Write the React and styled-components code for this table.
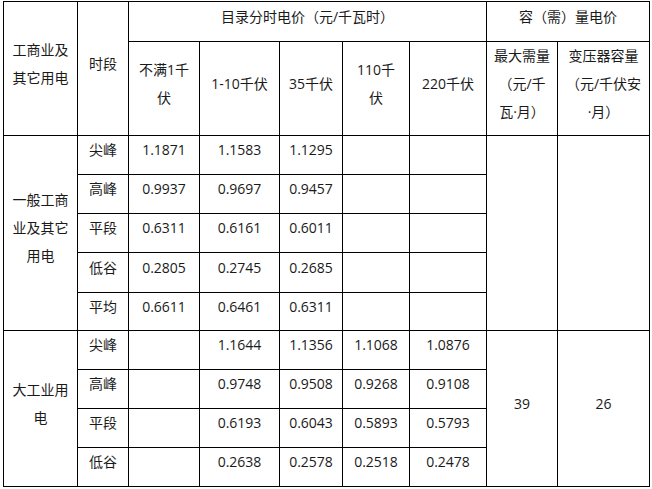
import styled, { createGlobalStyle } from 'styled-components';

const GlobalStyle = createGlobalStyle`
	html, body {
		margin: 0;
		padding: 0;
		background: #ffffff;
	}
`;

const Page = styled.div`
	padding: 1px 0 0 3px;
	font-family: 'Open Sans', 'Noto Sans CJK SC', sans-serif;
	font-size: 14px;
	color: #1a1a1a;
`;

// line-to-line distances measured off the picture
const Table = styled.div`
	display: grid;
	grid-template-columns: 74px 51px 71px 80px 63px 67px 77px 71px 92px;
	grid-template-rows: 40px 94px 39px 39px 39px 40px 38px 39px 39px 39px 39px;
	width: max-content;
	border-top: 1px solid #000;
	border-left: 1px solid #000;
`;

const Cell = styled.div`
	grid-column: span ${(p) => p.$cols || 1};
	grid-row: span ${(p) => p.$rows || 1};
	box-sizing: border-box;
	display: flex;
	align-items: center;
	justify-content: center;
	text-align: center;
	line-height: 28px;
	padding: 0 2px 10px;
	border-right: 1px solid #000;
	border-bottom: 1px solid #000;
	white-space: nowrap;
`;

const general = [
	['尖峰', '1.1871', '1.1583', '1.1295'],
	['高峰', '0.9937', '0.9697', '0.9457'],
	['平段', '0.6311', '0.6161', '0.6011'],
	['低谷', '0.2805', '0.2745', '0.2685'],
	['平均', '0.6611', '0.6461', '0.6311'],
];

const large = [
	['尖峰', '1.1644', '1.1356', '1.1068', '1.0876'],
	['高峰', '0.9748', '0.9508', '0.9268', '0.9108'],
	['平段', '0.6193', '0.6043', '0.5893', '0.5793'],
	['低谷', '0.2638', '0.2578', '0.2518', '0.2478'],
];

const App = () => {
	return (
		<Page>
			<GlobalStyle />
			<Table>
				<Cell $rows={2}>
					工商业及
					<br />
					其它用电
				</Cell>
				<Cell $rows={2}>时段</Cell>
				<Cell $cols={5}>目录分时电价（元/千瓦时）</Cell>
				<Cell $cols={2}>容（需）量电价</Cell>

				<Cell>
					不满1千
					<br />伏
				</Cell>
				<Cell>1-10千伏</Cell>
				<Cell>35千伏</Cell>
				<Cell>
					110千
					<br />伏
				</Cell>
				<Cell>220千伏</Cell>
				<Cell>
					最大需量
					<br />
					（元/千
					<br />
					瓦·月）
				</Cell>
				<Cell>
					变压器容量
					<br />
					（元/千伏安
					<br />
					·月）
				</Cell>

				{general.map((row, i) => (
					<>
						{i === 0 && (
							<Cell $rows={5}>
								一般工商
								<br />
								业及其它
								<br />
								用电
							</Cell>
						)}
						{row.map((v, j) => (
							<Cell key={j}>{v}</Cell>
						))}
						<Cell />
						<Cell />
						{i === 0 && (
							<>
								<Cell $rows={5} />
								<Cell $rows={5} />
							</>
						)}
					</>
				))}

				{large.map((row, i) => (
					<>
						{i === 0 && (
							<Cell $rows={4}>
								大工业用
								<br />电
							</Cell>
						)}
						<Cell>{row[0]}</Cell>
						<Cell />
						{row.slice(1).map((v, j) => (
							<Cell key={j}>{v}</Cell>
						))}
						{i === 0 && (
							<>
								<Cell $rows={4}>39</Cell>
								<Cell $rows={4}>26</Cell>
							</>
						)}
					</>
				))}
			</Table>
		</Page>
	);
};

export default App;
